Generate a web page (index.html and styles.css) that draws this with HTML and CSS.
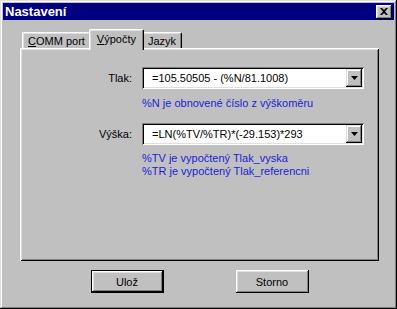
FILE: index.html
```html
<!DOCTYPE html>
<html>
<head>
  <meta charset="UTF-8">
  <title>Nastavení</title>
  <link rel="stylesheet" href="styles.css">
</head>
<body>
  <div class="window">
    <div class="titlebar">
      <span class="title">Nastavení</span>
      <span class="close">
        <svg width="8" height="7" viewBox="0 0 8 7"><path d="M0 0h2l2 2 2-2h2L5 3.5 8 7H6L4 5 2 7H0l3-3.5z" fill="#000"/></svg>
      </span>
    </div>
    <div class="body">
      <div class="tabs">
        <div class="tab"><u>C</u>OMM port</div>
        <div class="tab active"><u>V</u>ýpočty</div>
        <div class="tab">Jazyk</div>
      </div>
      <div class="panel">
        <label class="label">Tlak:</label>
        <div class="combo">
          <span class="value">=105.50505 - (%N/81.1008)</span>
          <span class="drop"><svg width="7" height="4" viewBox="0 0 7 4"><path d="M0 0h7L3.5 4z" fill="#000"/></svg></span>
        </div>
        <div class="hint first">%N je obnovené číslo z výškoměru</div>

        <label class="label second">Výška:</label>
        <div class="combo second">
          <span class="value">=LN(%TV/%TR)*(-29.153)*293</span>
          <span class="drop"><svg width="7" height="4" viewBox="0 0 7 4"><path d="M0 0h7L3.5 4z" fill="#000"/></svg></span>
        </div>
        <div class="hint last">%TV je vypočtený Tlak_vyska<br>%TR je vypočtený Tlak_referencni</div>
      </div>
      <div class="buttons">
        <button class="btn default">Ulož</button>
        <button class="btn">Storno</button>
      </div>
    </div>
  </div>
</body>
</html>
```

FILE: styles.css
```css
body {
  margin: 0;
  background: #c0c0c0;
  font-family: "Liberation Sans", Arial, sans-serif;
  font-size: 11px;
  color: #000;
}
.window {
  width: 397px;
  height: 309px;
  box-sizing: border-box;
  padding: 3px;
  background: #c0c0c0;
  box-shadow: inset -1px -1px #000, inset 1px 1px #dfdfdf,
              inset -2px -2px #808080, inset 2px 2px #fff;
}
.titlebar {
  height: 17px;
  background: #000080;
  color: #fff;
  display: flex;
  align-items: center;
  justify-content: space-between;
  padding: 0 2px 0 2px;
}
.title {
  font-weight: bold;
  font-size: 13px;
}
.close {
  width: 16px;
  height: 14px;
  background: #c0c0c0;
  box-shadow: inset -1px -1px #000, inset 1px 1px #fff,
              inset -2px -2px #808080, inset 2px 2px #dfdfdf;
  display: flex;
  align-items: center;
  justify-content: center;
}
.body {
  padding: 9px 15px 0 17px;
}
.tabs {
  display: flex;
  align-items: flex-end;
  padding-left: 2px;
}
.tab {
  height: 16px;
  line-height: 16px;
  padding: 0 5px;
  background: #c0c0c0;
  border-top: 1px solid #fff;
  border-left: 1px solid #fff;
  border-right: 1px solid #000;
  border-radius: 2px 2px 0 0;
  box-shadow: inset -1px 0 #808080, inset 1px 1px #dfdfdf;
  box-sizing: border-box;
}
.tab.active {
  height: 21px;
  line-height: 18px;
  margin: 0 -2px -2px;
  padding: 0 7px;
  position: relative;
  z-index: 1;
}
.panel {
  width: 359px;
  height: 213px;
  box-sizing: border-box;
  padding-top: 19px;
  box-shadow: inset 1px 1px #fff, inset -1px -1px #000,
              inset 2px 2px #dfdfdf, inset -2px -2px #808080;
  display: grid;
  grid-template-columns: 112px 222px;
  grid-auto-rows: min-content;
  column-gap: 10px;
  align-content: start;
}
.label {
  text-align: right;
  align-self: center;
}
.combo {
  display: flex;
  align-items: center;
  height: 22px;
  box-sizing: border-box;
  padding: 2px;
  background: #fff;
  box-shadow: inset 1px 1px #808080, inset -1px -1px #fff,
              inset 2px 2px #000, inset -2px -2px #dfdfdf;
}
.combo.second,
.label.second {
  margin-top: 13px;
}
.value {
  padding-left: 8px;
}
.drop {
  margin-left: auto;
  width: 16px;
  height: 18px;
  background: #c0c0c0;
  box-shadow: inset -1px -1px #000, inset 1px 1px #dfdfdf,
              inset -2px -2px #808080, inset 2px 2px #fff;
  display: flex;
  align-items: center;
  justify-content: center;
}
.hint {
  grid-column: 2;
  color: #1c1cd8;
  line-height: 13px;
}
.hint.first {
  margin-top: 8px;
}
.hint.last {
  margin-top: 7px;
}
.buttons {
  display: flex;
  justify-content: center;
  gap: 72px;
  margin-top: 9px;
}
.btn {
  width: 73px;
  height: 23px;
  padding: 0;
  border: none;
  background: #c0c0c0;
  font-family: inherit;
  font-size: 11px;
  color: #000;
  box-shadow: inset -1px -1px #000, inset 1px 1px #fff,
              inset -2px -2px #808080, inset 2px 2px #dfdfdf;
}
.btn.default {
  box-shadow: inset 0 0 0 1px #000, inset -2px -2px #000, inset 2px 2px #fff,
              inset -3px -3px #808080, inset 3px 3px #dfdfdf;
}
```
